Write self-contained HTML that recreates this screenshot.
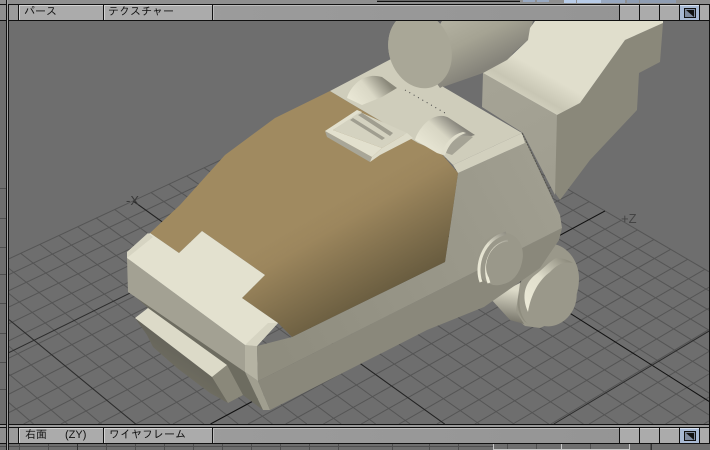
<!DOCTYPE html>
<html><head><meta charset="utf-8"><style>
html,body{margin:0;padding:0;background:#6e6e6e;overflow:hidden;width:710px;height:450px}
#r{position:relative;width:710px;height:450px;overflow:hidden;background:#6e6e6e;font-family:"Liberation Sans","IPAGothic","WenQuanYi Zen Hei",sans-serif}
svg{position:absolute;left:0;top:0}
text{font-family:"Liberation Sans","IPAGothic","WenQuanYi Zen Hei",sans-serif}
.t{position:absolute;font-size:11px;line-height:14px;color:#111;white-space:pre}
</style></head><body><div id="r">
<svg width="710" height="450" viewBox="0 0 710 450" xmlns="http://www.w3.org/2000/svg">
<defs>
<clipPath id="vp"><rect x="9" y="21" width="700" height="403"/></clipPath>
<linearGradient id="tan" gradientUnits="userSpaceOnUse" x1="330" y1="205" x2="385" y2="300"><stop offset="0" stop-color="#a08a60"/><stop offset=".2" stop-color="#9c865d"/><stop offset="1" stop-color="#665a3e"/></linearGradient>
<linearGradient id="cyl" gradientUnits="userSpaceOnUse" x1="452" y1="20" x2="478" y2="72"><stop offset="0" stop-color="#b2b0a0"/><stop offset=".45" stop-color="#a5a393"/><stop offset="1" stop-color="#85837a"/></linearGradient>
<linearGradient id="topf" gradientUnits="userSpaceOnUse" x1="512" y1="92" x2="528" y2="64"><stop offset="0" stop-color="#d2d0be"/><stop offset=".3" stop-color="#c8c6b4"/><stop offset="1" stop-color="#e0decc"/></linearGradient>
<linearGradient id="lf" gradientUnits="userSpaceOnUse" x1="500" y1="80" x2="555" y2="180"><stop offset="0" stop-color="#a5a395"/><stop offset="1" stop-color="#a09e90"/></linearGradient>
<linearGradient id="h1" gradientUnits="userSpaceOnUse" x1="352" y1="100" x2="382" y2="76"><stop offset="0" stop-color="#e8e6d4"/><stop offset=".5" stop-color="#dad8c6"/><stop offset="1" stop-color="#8a887a"/></linearGradient>
<linearGradient id="h2" gradientUnits="userSpaceOnUse" x1="425" y1="148" x2="452" y2="118"><stop offset="0" stop-color="#e8e6d4"/><stop offset=".55" stop-color="#d8d6c4"/><stop offset="1" stop-color="#85837a"/></linearGradient>
<linearGradient id="cone" gradientUnits="userSpaceOnUse" x1="515" y1="290" x2="510" y2="322"><stop offset="0" stop-color="#dddbc9"/><stop offset="1" stop-color="#77756a"/></linearGradient>
<linearGradient id="arc" gradientUnits="userSpaceOnUse" x1="520" y1="310" x2="565" y2="258"><stop offset="0" stop-color="#eeecda"/><stop offset=".55" stop-color="#e0decc"/><stop offset="1" stop-color="#8e8c7e"/></linearGradient>
<linearGradient id="arcA" gradientUnits="userSpaceOnUse" x1="480" y1="275" x2="512" y2="234"><stop offset="0" stop-color="#ecead8"/><stop offset=".55" stop-color="#e0decc"/><stop offset="1" stop-color="#86847a"/></linearGradient>
<linearGradient id="under" gradientUnits="userSpaceOnUse" x1="165" y1="375" x2="190" y2="335"><stop offset="0" stop-color="#716f62"/><stop offset="1" stop-color="#5f5e56"/></linearGradient>
<linearGradient id="side" gradientUnits="userSpaceOnUse" x1="280" y1="350" x2="560" y2="200"><stop offset="0" stop-color="#8f8d7f"/><stop offset="1" stop-color="#a09e90"/></linearGradient>
<linearGradient id="bar" x1="0" y1="0" x2="1" y2="0"><stop offset="0" stop-color="#9f9f9f"/><stop offset="1" stop-color="#939393"/></linearGradient>
</defs>

<g clip-path="url(#vp)"><g id="grid" fill="none" stroke-width="1"></g>
<text x="126" y="205" font-size="13" fill="#3a3a3a">-X</text>
<text x="621" y="223" font-size="13" fill="#444">+Z</text>

<!-- cylinder -->
<polygon fill="url(#cyl)" points="442,21 533,21 528,40 513,53 507,62 483,73 440,88 420,60"/>
<ellipse cx="420" cy="50" rx="31" ry="39" transform="rotate(-18 420 50)" fill="#a9a797"/>

<!-- right block -->
<polygon fill="#8a887a" points="625,40 663,23 660,62 639,73 637,110 590,160 560,200 553,190 557,115 580,103"/>
<polygon fill="url(#lf)" points="483,73 557,115 555,195 523,133 482,107"/>
<polygon fill="url(#topf)" points="535,21 663,21 663,23 625,40 580,103 557,115 483,73 507,60 528,40 530,28"/>

<!-- lower knob back -->
<path fill="#9a988a" d="M553 244 C568 246 579 262 579 278 C579 298 570 316 540 328 L525 326 L490 298 L520 283 L548 250Z"/>
<polygon fill="url(#cone)" points="490,298 520,283 516,311 524,324 510,320"/>
<path fill="#8e8c7e" d="M520 292 C518 305 521 318 528 324 L524 321 C517 312 516 300 520 292Z"/>
<ellipse cx="551" cy="298" rx="25" ry="29" transform="rotate(24 551 298)" fill="#9a988a"/>
<path fill="url(#arc)" d="M528 312 C521 296 525 283 535 275 C543 269 549 262 556 258 C562 258 569 260 573 263 C562 261 556 266 550 272 C539 280 531 294 528 312Z"/>

<!-- under body -->
<polygon fill="#6d6c60" points="128,290 148,308 228,403 243,395 263,410 245,372"/>
<polygon fill="url(#under)" points="135,318 212,377 228,403 210,393 177,368 153,347 147,335"/>
<polygon fill="#8a887a" points="212,377 227,365 243,395 228,403"/>
<polygon fill="#dcdac8" points="135,318 148,308 227,365 212,377"/>

<!-- front -->
<polygon fill="#a3a193" points="127,258 245,345 245,372 128,292"/>
<polygon fill="#a09e8f" points="245,372 258,381 270,410 263,410"/>
<polygon fill="#b5b3a3" points="245,345 257,346 258,381 245,372"/>

<!-- side -->
<polygon fill="#8a887b" points="258,381 562,228 559,240 540,268 484,307 427,330 270,410"/>
<polygon fill="url(#side)" points="458,173 525,143 522,133 560,215 562,228 258,381 257,346 292,337 445,262 452,215"/>

<!-- tan -->
<polygon fill="url(#tan)" points="330,91 350,103 418,143 440,152 458,173 452,215 445,262 292,337 278,323 242,298 265,275 202,231 179,253 150,233 180,205 225,155 275,118"/>

<!-- white front top -->
<polygon fill="#e3e1cf" points="150,233 179,253 202,231 265,275 242,298 278,323 257,346 245,345 127,258 127,252"/>
<polygon fill="#d6d4c2" points="127,252 148,233 153,237 127,258"/>
<polygon fill="#d6d4c2" points="245,345 268,323 278,323 257,346"/>

<!-- top plate -->
<polygon fill="#cfcdbb" points="330,91 393,58 440,85 522,133 453,165 440,152 418,143 350,103"/>
<polygon fill="#d2d0be" points="453,165 522,133 525,143 458,173"/>
<path d="M405 90 L445 113" stroke="#444" stroke-width="1" stroke-dasharray="1 4" fill="none"/>
<path d="M522 133 L553 198" stroke="#55544c" stroke-width="1" stroke-dasharray="2 1" fill="none"/>

<!-- redraw cylinder cap edge over plate -->
<polygon fill="url(#cyl)" points="442,21 470,21 470,70 440,88 420,60"/>
<ellipse cx="420" cy="50" rx="31" ry="39" transform="rotate(-18 420 50)" fill="#a9a797"/>

<!-- hinge left -->
<path fill="url(#h1)" d="M347 98 C349 90 358 79 367 77 C373 75 378 76 382 77 L397 88 L382 97 L362 105 Z"/>
<!-- hinge right -->
<path fill="url(#h2)" d="M415 140 C417 132 426 120 435 117 C441 115 446 116 449 118 L475 135 L468 137 L443 155 L437 153 Z"/>
<path fill="#a5a395" d="M446 153 C449 142 459 134 471 136 L473 137 L452 155 Z"/>
<path fill="#e0decc" d="M441 154 C445 143 453 134 463 132 L466 133 C456 136 449 144 445 155 Z"/>

<!-- tab -->
<polygon fill="#a8a698" points="325,131 327,137 370,162 372,157"/>
<polygon fill="#e2e0ce" points="325,131 357,110 362,112 333,130 382,148 372,157"/>
<polygon fill="#d4d2c0" points="333,130 360,112 407,133 382,148"/>
<polygon fill="#dddbc9" points="372,157 370,162 380,155 413,138 407,133 382,148"/>
<polygon fill="#a09e90" points="358,115 362,113 393,133 390,136"/>
<polygon fill="#a09e90" points="350,120 353,118 385,138 382,140"/>

<!-- knob A -->
<ellipse cx="500" cy="259" rx="22" ry="27" transform="rotate(24 500 259)" fill="#9a988a"/>
<path d="M481 282 C475 266 482 240 506 233" fill="none" stroke="url(#arcA)" stroke-width="3"/>
<path d="M489 283 C483 268 488 246 508 241" fill="none" stroke="url(#arcA)" stroke-width="3"/>
<ellipse cx="504" cy="263" rx="17" ry="22" transform="rotate(24 504 263)" fill="#9a988a"/>
</g>

<!-- frame -->
<rect x="0" y="0" width="710" height="4" fill="#8f8f8f"/>
<rect x="377" y="0" width="143" height="1" fill="#6a6a6a"/><rect x="377" y="1" width="143" height="1" fill="#111"/>
<rect x="523" y="0" width="12" height="2" fill="#98a8c0"/><rect x="537" y="0" width="12" height="2" fill="#98a8c0"/>
<rect x="564" y="0" width="12" height="3" fill="#b8cce8"/><rect x="577" y="0" width="12" height="3" fill="#b8cce8"/><rect x="589" y="0" width="12" height="3" fill="#b8cce8"/><rect x="601" y="0" width="12" height="3" fill="#98a8c0"/><rect x="613" y="0" width="12" height="3" fill="#98a8c0"/><rect x="627" y="0" width="12" height="3" fill="#8f9db2"/><rect x="640" y="0" width="12" height="3" fill="#8f9db2"/><rect x="652" y="0" width="12" height="3" fill="#8f9db2"/><rect x="664" y="0" width="12" height="3" fill="#8f9db2"/>
<rect x="0" y="4" width="710" height="1" fill="#111"/>
<rect x="0" y="5" width="710" height="15" fill="url(#bar)"/>
<rect x="0" y="20" width="710" height="1" fill="#111"/>

<rect x="0" y="424" width="710" height="1" fill="#111"/>
<rect x="0" y="425" width="710" height="2" fill="#9a9a9a"/>
<rect x="0" y="427" width="710" height="1" fill="#111"/>
<rect x="0" y="428" width="710" height="15" fill="url(#bar)"/>
<rect x="0" y="443" width="710" height="1" fill="#111"/>
<rect x="0" y="444" width="710" height="6" fill="#6e6e6e"/>
<g stroke="#4f4f4f"><path d="M0 446.500H493M19.500 444V450M48.500 444V450M106.500 444V450M135.500 444V450M164.500 444V450M193.500 444V450M222.500 444V450M251.500 444V450M280.500 444V450M309.500 444V450M338.500 444V450M392.500 444V450M429.500 444V450M458.500 444V450M507.500 444V450M536.500 444V450M590.500 444V450M650.500 444V450"/></g>
<path d="M77.500 444V450M651.500 444V450" stroke="#333"/>
<path d="M493.500 444V450M561.500 444V450M629.500 444V450M493 449.500H630" stroke="#c8c8c8"/>

<!-- left column -->
<rect x="0" y="21" width="6" height="403" fill="#6e6e6e"/>
<path d="M0 188.500H6M0 218.500H6M0 247.500H6M0 274.500H6M0 303.500H6M0 333.500H6M0 362.500H6M0 389.500H6" stroke="#4f4f4f"/>
<rect x="0" y="5" width="6" height="15" fill="#8f8f8f"/><rect x="0" y="428" width="6" height="15" fill="#8f8f8f"/>
<rect x="6" y="0" width="1" height="450" fill="#111"/>
<rect x="7" y="0" width="1" height="450" fill="#a4a4a4"/>
<rect x="8" y="4" width="1" height="446" fill="#111"/>
<rect x="709" y="4" width="1" height="440" fill="#111"/>

<!-- buttons top & bottom -->
<g id="bt">
<rect x="9" y="5" width="9" height="15" fill="#9c9c9c"/><rect x="18" y="5" width="1" height="15" fill="#111"/>
<rect x="19" y="5" width="84" height="15" fill="#ababab"/><rect x="19" y="5" width="84" height="1" fill="#d2d2d2"/><rect x="19" y="5" width="1" height="15" fill="#d2d2d2"/><rect x="103" y="5" width="1" height="15" fill="#111"/>
<rect x="104" y="5" width="108" height="15" fill="#ababab"/><rect x="104" y="5" width="108" height="1" fill="#d2d2d2"/><rect x="104" y="5" width="1" height="15" fill="#d2d2d2"/><rect x="212" y="5" width="1" height="15" fill="#111"/>
<rect x="213" y="5" width="406" height="1" fill="#bcbcbc"/><rect x="213" y="5" width="1" height="15" fill="#bcbcbc"/>
<rect x="619" y="5" width="1" height="15" fill="#111"/><rect x="620" y="5" width="19" height="15" fill="#ababab"/><rect x="620" y="5" width="19" height="1" fill="#cfcfcf"/>
<rect x="639" y="5" width="1" height="15" fill="#111"/><rect x="640" y="5" width="19" height="15" fill="#ababab"/><rect x="640" y="5" width="19" height="1" fill="#cfcfcf"/>
<rect x="659" y="5" width="1" height="15" fill="#111"/><rect x="660" y="5" width="19" height="15" fill="#ababab"/><rect x="660" y="5" width="19" height="1" fill="#cfcfcf"/>
<rect x="679" y="5" width="1" height="15" fill="#111"/><rect x="680" y="5" width="19" height="15" fill="#a9bad4"/><rect x="680" y="5" width="19" height="1" fill="#d8e2f0"/>
<rect x="684.500" y="8.500" width="11" height="9" fill="#7f8ba0" stroke="#111"/><polygon points="686,10 694,10 694,17" fill="#111"/>
<rect x="699" y="5" width="1" height="15" fill="#111"/><rect x="700" y="5" width="9" height="15" fill="#ababab"/>
</g>
<g transform="translate(0,423)">
<rect x="9" y="5" width="9" height="15" fill="#9c9c9c"/><rect x="18" y="5" width="1" height="15" fill="#111"/>
<rect x="19" y="5" width="84" height="15" fill="#ababab"/><rect x="19" y="5" width="84" height="1" fill="#d2d2d2"/><rect x="19" y="5" width="1" height="15" fill="#d2d2d2"/><rect x="103" y="5" width="1" height="15" fill="#111"/>
<rect x="104" y="5" width="108" height="15" fill="#ababab"/><rect x="104" y="5" width="108" height="1" fill="#d2d2d2"/><rect x="104" y="5" width="1" height="15" fill="#d2d2d2"/><rect x="212" y="5" width="1" height="15" fill="#111"/>
<rect x="213" y="5" width="406" height="1" fill="#bcbcbc"/><rect x="213" y="5" width="1" height="15" fill="#bcbcbc"/>
<rect x="619" y="5" width="1" height="15" fill="#111"/><rect x="620" y="5" width="19" height="15" fill="#ababab"/><rect x="620" y="5" width="19" height="1" fill="#cfcfcf"/>
<rect x="639" y="5" width="1" height="15" fill="#111"/><rect x="640" y="5" width="19" height="15" fill="#ababab"/><rect x="640" y="5" width="19" height="1" fill="#cfcfcf"/>
<rect x="659" y="5" width="1" height="15" fill="#111"/><rect x="660" y="5" width="19" height="15" fill="#ababab"/><rect x="660" y="5" width="19" height="1" fill="#cfcfcf"/>
<rect x="679" y="5" width="1" height="15" fill="#111"/><rect x="680" y="5" width="19" height="15" fill="#a9bad4"/><rect x="680" y="5" width="19" height="1" fill="#d8e2f0"/>
<rect x="684.500" y="8.500" width="11" height="9" fill="#7f8ba0" stroke="#111"/><polygon points="686,10 694,10 694,17" fill="#111"/>
<rect x="699" y="5" width="1" height="15" fill="#111"/><rect x="700" y="5" width="9" height="15" fill="#ababab"/>
</g>
</svg>
<div class="t" style="left:24px;top:5px">パース</div>
<div class="t" style="left:108px;top:5px">テクスチャー</div>
<div class="t" style="left:25px;top:428px">右面</div>
<div class="t" style="left:65px;top:428px">(ZY)</div>
<div class="t" style="left:109px;top:428px">ワイヤフレーム</div>
</div>
<script>
(function(){
var g=document.getElementById('grid'),N=15,M=2.6;
var X0=9,X1=709,Y0=21,Y1=424;
function P(u,v){var w=1-.0705*u-.0876*v;return [(386-262.4*u+166*v)/w,(83+103.8*u+109.5*v)/w];}
function L(a,b,c){
 var dx=b[0]-a[0],dy=b[1]-a[1],t0=0,t1=1,p=[-dx,dx,-dy,dy],q=[a[0]-X0,X1-a[0],a[1]-Y0,Y1-a[1]];
 for(var i=0;i<4;i++){
  if(p[i]===0){if(q[i]<0)return;continue;}
  var r=q[i]/p[i];
  if(p[i]<0){if(r>t0)t0=r;}else{if(r<t1)t1=r;}
 }
 if(t0>=t1)return;
 var d=document.createElementNS('http://www.w3.org/2000/svg','line');
 d.setAttribute('x1',a[0]+t0*dx);d.setAttribute('y1',a[1]+t0*dy);d.setAttribute('x2',a[0]+t1*dx);d.setAttribute('y2',a[1]+t1*dy);d.setAttribute('stroke',c);g.appendChild(d);
}
for(var k=0;k<=M*N;k++){var t=k/N;
 L(P(t,0),P(t,M),'#555555');
 L(P(0,t),P(M,t),'#555555');
}
L(P(.4256,0),P(.4256,M),'#111');
L(P(1.6,0),P(1.6,M),'#2c2c2c');
L(P(0,.379),P(M,.379),'#2c2c2c');
L(P(0,1.605),P(M,1.605),'#2c2c2c');
L(P(1,0),P(1,M),'#222');L(P(0,1),P(M,1),'#111');
})();
</script>
</body></html>
